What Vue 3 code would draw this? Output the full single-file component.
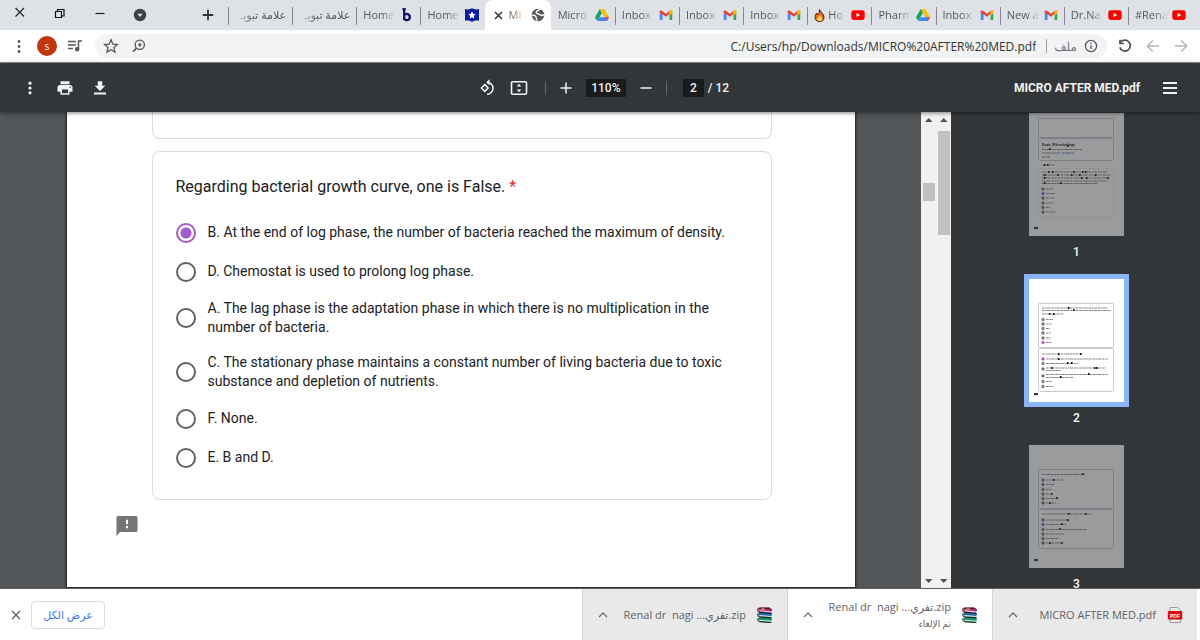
<script setup>
import { ref } from 'vue'

const tabs = [
  { title: 'علامة تبويـ', rtl: true },
  { title: 'علامة تبويـ', rtl: true },
  { title: 'Home', icon: 'b' },
  { title: 'Home', icon: 'badge' },
  { title: 'MI', icon: 'globe', active: true },
  { title: 'Micro', icon: 'drive' },
  { title: 'Inbox', icon: 'gmail' },
  { title: 'Inbox', icon: 'gmail' },
  { title: 'Inbox', icon: 'gmail' },
  { title: 'Ho', icon: 'youtube', flame: true },
  { title: 'Pharm', icon: 'drive' },
  { title: 'Inbox', icon: 'gmail' },
  { title: 'New a', icon: 'gmail' },
  { title: 'Dr.Na', icon: 'youtube' },
  { title: '#Rena', icon: 'youtube' }
]

const url = ref('C:/Users/hp/Downloads/MICRO%20AFTER%20MED.pdf')
const zoom = ref('110%')
const page = ref('2')
const answer = ref('B')

const options = [
  { id: 'B', text: 'B. At the end of log phase, the number of bacteria reached the maximum of density.' },
  { id: 'D', text: 'D. Chemostat is used to prolong log phase.' },
  { id: 'A', text: 'A. The lag phase is the adaptation phase in which there is no multiplication in the number of bacteria.' },
  { id: 'C', text: 'C. The stationary phase maintains a constant number of living bacteria due to toxic substance and depletion of nutrients.' },
  { id: 'F', text: 'F. None.' },
  { id: 'E', text: 'E. B and D.' }
]

const scrollbars = [
  { top: 12.3, size: 4 },
  { top: 0.5, size: 23.5 }
]

// Page miniatures: cards are [y, height], lines are [x, y, width, colour], radios are [y, selected].
const thumbs = [
  {
    n: 1,
    heading: 'Basic Microbiology',
    cards: [[6, 19], [26, 22]],
    lines: [
      [13, 36.5, 40], [13, 40, 19], [33, 40, 12, '#3b6fb5'], [13, 44, 8, '#c0392b'], [13, 52, 13],
      [13, 59, 66], [13, 62, 69], [13, 65, 68], [13, 68, 66], [13, 70.5, 56],
      [17, 76, 7], [17, 80.5, 9], [17, 85, 9], [17, 90, 7], [17, 94.5, 4], [17, 99, 10]
    ],
    radios: [[76], [80.5, true], [85], [90], [94.5], [99]],
    blots: [[20, 36], [38, 33], [15, 52], [18, 52], [19, 59], [23, 59], [44, 59], [53, 59], [56, 59], [15, 62], [28, 62], [42, 62], [50, 62], [66, 62], [15, 65], [52, 65], [57, 65], [78, 65], [15, 70], [31, 70]]
  },
  {
    n: 2,
    cards: [[25, 44], [70, 43]],
    lines: [
      [13, 29, 66], [13, 31.5, 69], [13, 35, 21],
      [17, 40.5, 7], [17, 45, 6], [17, 49.5, 4], [17, 54, 5], [17, 59, 5], [17, 63.5, 6],
      [13, 75, 40], [17, 80, 62], [17, 84.5, 32], [17, 89, 60], [17, 91.5, 15],
      [17, 95.5, 62], [17, 98.5, 27], [17, 102.5, 6], [17, 107.5, 7]
    ],
    radios: [[40.5], [45], [49.5], [54], [59], [63.5, true], [80, true], [84.5], [90], [97], [102.5], [107.5]],
    blots: [[39, 29], [44, 31], [20, 35], [24, 35], [29, 75], [51, 75], [29, 80], [38, 84], [42, 84], [22, 89], [65, 89], [67, 89], [59, 95], [31, 98]]
  },
  {
    n: 3,
    cards: [[25, 39], [65, 39]],
    lines: [
      [13, 29.5, 43], [17, 35, 17], [17, 39.5, 8], [17, 44.5, 6], [17, 49, 5], [17, 53.5, 13], [17, 58, 10],
      [13, 69, 49], [17, 75, 24], [17, 79.5, 20], [17, 84.5, 41], [17, 89, 18], [17, 93.5, 13], [17, 98, 17]
    ],
    radios: [[35, true], [39.5], [44.5], [49], [53.5], [58], [75], [79.5, true], [84.5], [89], [93.5], [98]],
    blots: [[53, 29], [24, 35], [22, 49], [27, 53], [20, 58], [39, 69], [56, 69], [38, 75], [32, 79], [30, 84], [20, 98], [32, 98]]
  }
]

const downloads = [
  { name: 'Renal dr  nagi ...تفري.zip', icon: 'rar', shaded: true },
  { name: 'Renal dr  nagi ...تفري.zip', note: 'تم الإلغاء', icon: 'rar' },
  { name: 'MICRO AFTER MED.pdf', icon: 'pdf', shaded: true }
]
</script>

<template>
  <div class="browser">
    <header class="tabstrip">
      <div class="window-controls">
        <button aria-label="Close window"><svg width="20" height="20" viewBox="0 0 20 20"><path d="M5.500 5l8.500 8.500M14 5l-8.500 8.500" stroke="#222" stroke-width="1.100" /></svg></button>
        <button aria-label="Restore window"><svg width="20" height="20" viewBox="0 0 20 20"><path d="M5.500 8.500h6v6h-6zM7.500 8V6.500h6.500v6.500H12" fill="none" stroke="#111" stroke-width="1.200" /></svg></button>
        <button aria-label="Minimize window"><svg width="20" height="20" viewBox="0 0 20 20"><path d="M5.500 10.500h9" stroke="#222" stroke-width="1.200" /></svg></button>
        <button aria-label="Search tabs"><svg width="20" height="20" viewBox="0 0 20 20"><circle cx="10" cy="12" r="6.200" fill="#3c4043" /><path d="M7.300 10.700h5.400L10 14z" fill="#dee1e6" /></svg></button>
      </div>
      <button class="new-tab" aria-label="New tab"><svg width="20" height="20" viewBox="0 0 20 20"><path d="M4.800 12h10.400M10 6.800v10.400" stroke="#333" stroke-width="1.800" /></svg></button>
      <nav class="tabs">
        <div v-for="(t, i) in tabs" :key="i" class="tab" :class="{ active: t.active, after: i === 5 }">
          <button v-if="t.active" class="tab-close" aria-label="Close tab"><svg width="9" height="9" viewBox="0 0 9 9"><path d="M1 1l7 7M8 1L1 8" stroke="#333" stroke-width="1.500" /></svg></button>
          <svg v-if="t.flame" class="flame" width="11" height="13" viewBox="0 0 11 13"><path d="M5.500.5C6 3 10 4.500 10 8.500c0 2.500-2 4-4.500 4S1 11 1 8.500C1 6.500 2 5.500 2.500 4c.6.6 1 1.200 1.200 2C5 4.500 5.800 2.500 5.500.5z" fill="#f26a1b" stroke="#3a2416" /><path d="M5.600 6c1.200 1.500 2.400 2.200 2.400 4 0 1.200-1 2-2.500 2S3.200 11.200 3.200 10c0-1.500 1.800-2 2.400-4z" fill="#ffd45a" /></svg>
          <a href="#" class="tab-title" :class="{ rtl: t.rtl }">{{ t.title }}</a>
          <svg v-if="t.icon === 'b'" class="fav" viewBox="0 0 14 14"><path d="M2.500 1.200h3.200M4.200 1v11M4.500 7c1-1.600 5.300-1.700 5.300 2.100 0 3.600-4 3.700-5.500 1.900" fill="none" stroke="#14146b" stroke-width="2.300" /></svg>
          <svg v-else-if="t.icon === 'badge'" class="fav" viewBox="0 0 14 14"><path d="M0 1c2.500 1 4.500.2 7-.7 2.500.9 4.500 1.700 7 .7v11.500c-3-.3-5 .2-7 1.200-2-1-4-1.500-7-1.200z" fill="#0b1e9c" /><path d="M7 3.200l1.100 2.500 2.700.3-2 1.800.5 2.700L7 9.200l-2.300 1.300.5-2.700-2-1.800 2.700-.3z" fill="#fff" /></svg>
          <svg v-else-if="t.icon === 'globe'" class="fav" viewBox="0 0 14 14"><circle cx="7" cy="7" r="6.200" fill="#53575b" /><path d="M1.200 7.300c1.500-.3 2.800.2 3.600 1 .8.700-.1 1.500.7 2.200.6.500.6 1 .3 2M9.200 1.300C7.500 2 5 3 5.200 4.700c.2 1.300 2 .7 2.800 1.400.8.700 1.700 1.600 3 1.300.9-.2 1.400-.6 2-1.200" fill="none" stroke="#fff" stroke-width="1.500" /></svg>
          <svg v-else-if="t.icon === 'drive'" class="fav" viewBox="0 0 14 14"><path d="M4.800 1L0 9.200l2.200 3.800L7 4.800z" fill="#0fa55b" /><path d="M4.800 1h4.400L14 9.200H9.600z" fill="#fbbc04" /><path d="M4.600 9.200H14L11.800 13H2.200z" fill="#4285f4" /><path d="M11 9.200h3L11.800 13z" fill="#ea4335" /></svg>
          <svg v-else-if="t.icon === 'gmail'" class="fav" viewBox="0 0 14 14"><path d="M.8 3v9h2.700V5.500z" fill="#4285f4" /><path d="M13.200 3v9h-2.700V5.500z" fill="#34a853" /><path d="M10.500 3.500L13.200 2v3.200l-2.700 2z" fill="#fbbc04" /><path d="M.8 2.200L3.500 3 7 5.700 10.500 3l1.700-.8 1 1.300L7 8.800.8 4.800z" fill="#ea4335" /><path d="M10.500 3l1.700-.8 1 .8v1.800l-2.700 2z" fill="#fbbc04" /></svg>
          <svg v-else-if="t.icon === 'youtube'" class="fav" viewBox="0 0 14 14"><rect x=".3" y="2.200" width="13.400" height="9.800" rx="2.400" fill="#f00" /><path d="M5.500 5v4.200L9.200 7.100z" fill="#fff" /></svg>
        </div>
      </nav>
    </header>

    <div class="address-row">
      <button class="sq" aria-label="Browser menu"><svg width="20" height="20" viewBox="0 0 20 20" fill="#55585c"><circle cx="10" cy="5.500" r="1.400" /><circle cx="10" cy="10.500" r="1.400" /><circle cx="10" cy="15.500" r="1.400" /></svg></button>
      <button class="avatar" aria-label="Profile">s</button>
      <button class="sq" aria-label="Media"><svg width="20" height="20" viewBox="0 0 20 20" fill="none" stroke="#55585c" stroke-width="1.500"><path d="M3 5.500h8M3 9h8M3 12.500h5M13.500 13V5h3.500" /><circle cx="12.100" cy="13.300" r="1.500" fill="#55585c" /></svg></button>
      <div class="omnibox">
        <button class="sq" aria-label="Bookmark"><svg width="16" height="16" viewBox="0 0 16 16"><path d="M8 1.800l1.800 4.300 4.600.4-3.500 3 1.100 4.600L8 11.700l-4 2.400 1.100-4.600-3.500-3 4.600-.4z" fill="none" stroke="#55585c" stroke-width="1.300" /></svg></button>
        <button class="sq" aria-label="Zoom"><svg width="16" height="16" viewBox="0 0 16 16" fill="none" stroke="#55585c" stroke-width="1.300"><circle cx="8.800" cy="6.800" r="4.600" /><path d="M5.500 10.200L2 13.600" stroke-width="1.700" /><path d="M6.800 6.800h4M8.800 4.800v4" /></svg></button>
        <input v-model="url" class="url" aria-label="Address" />
        <span class="divider"></span>
        <span class="scheme">ملف</span>
        <svg width="14" height="14" viewBox="0 0 14 14"><circle cx="7" cy="7" r="5.600" fill="none" stroke="#55585c" stroke-width="1.300" /><path d="M7 6.200V10M7 3.700v1.400" stroke="#55585c" stroke-width="1.400" /></svg>
      </div>
      <div class="nav">
        <button class="sq" aria-label="Reload"><svg width="16" height="16" viewBox="0 0 16 16" fill="none" stroke="#4c5054" stroke-width="1.700"><path d="M3.400 4.600A5.400 5.400 0 1 1 2.800 9.400" /><path d="M3 1.800v3.700h3.900" /></svg></button>
        <button class="sq" aria-label="Forward"><svg width="16" height="16" viewBox="0 0 16 16" fill="none" stroke="#b4b6b9" stroke-width="1.500"><path d="M14 8H2.500M7.800 2.500L2.300 8l5.500 5.500" /></svg></button>
        <button class="sq" aria-label="Back"><svg width="16" height="16" viewBox="0 0 16 16" fill="none" stroke="#b4b6b9" stroke-width="1.500"><path d="M2 8h11.500M8.200 2.500L13.700 8l-5.500 5.500" /></svg></button>
      </div>
    </div>

    <div class="pdf-toolbar">
      <div class="group tools">
        <button aria-label="More"><svg width="18" height="18" viewBox="0 0 18 18" fill="#f1f1f1"><circle cx="9" cy="4.200" r="1.600" /><circle cx="9" cy="9" r="1.600" /><circle cx="9" cy="13.800" r="1.600" /></svg></button>
        <button aria-label="Print"><svg width="18" height="18" viewBox="0 0 24 24" fill="#f1f1f1"><path d="M19 8H5c-1.660 0-3 1.340-3 3v6h4v4h12v-4h4v-6c0-1.660-1.340-3-3-3zm-3 11H8v-5h8v5zm3-7a1 1 0 1 1 0-2 1 1 0 0 1 0 2zM18 3H6v4h12V3z" /></svg></button>
        <button aria-label="Download"><svg width="18" height="18" viewBox="0 0 24 24" fill="#f1f1f1"><path d="M19 9h-4V3H9v6H5l7 7 7-7zM4 18v2.500h16V18H4z" /></svg></button>
      </div>
      <div class="group center">
        <button aria-label="Rotate"><svg width="18" height="18" viewBox="0 0 18 18" fill="none" stroke="#f1f1f1" stroke-width="1.500"><path d="M5.800 5.600L9.200 9l-3.400 3.400L2.400 9z" /><path d="M8 3.200a6 6 0 1 1 0 12" /><path d="M10.500.8L7.800 3.300l2.700 2.400" fill="#f1f1f1" stroke-width="1" /></svg></button>
        <button class="fit" aria-label="Fit to page"><svg width="18" height="18" viewBox="0 0 18 18"><rect x="1.500" y="2.700" width="15" height="12.600" rx="1" fill="none" stroke="#f1f1f1" stroke-width="1.600" /><path d="M9 4.800l2.300 2.700H6.700zM9 13.200l2.300-2.700H6.700z" fill="#f1f1f1" /></svg></button>
        <span class="divider"></span>
        <button aria-label="Zoom in"><svg width="14" height="14" viewBox="0 0 14 14"><path d="M1.500 7h11M7 1.500v11" stroke="#f1f1f1" stroke-width="1.500" /></svg></button>
        <input v-model="zoom" class="field zoom" aria-label="Zoom level" />
        <button aria-label="Zoom out"><svg width="14" height="14" viewBox="0 0 14 14"><path d="M1.500 7h11" stroke="#f1f1f1" stroke-width="1.500" /></svg></button>
        <span class="divider"></span>
        <div class="pager"><input v-model="page" class="field page-no" aria-label="Page number" /><span>/ 12</span></div>
      </div>
      <div class="group end">
        <span class="doc-title">MICRO AFTER MED.pdf</span>
        <button aria-label="Toggle sidebar"><svg width="18" height="18" viewBox="0 0 18 18"><path d="M2 4h14M2 9h14M2 14h14" stroke="#f1f1f1" stroke-width="2" /></svg></button>
      </div>
    </div>

    <main class="viewer">
      <section class="canvas">
        <article class="sheet">
          <div class="card previous"></div>
          <fieldset class="card">
            <legend>Regarding bacterial growth curve, one is False. <span class="required">*</span></legend>
            <div class="options">
              <label v-for="o in options" :key="o.id" class="option">
                <input v-model="answer" type="radio" name="answer" :value="o.id" />
                <span>{{ o.text }}</span>
              </label>
            </div>
          </fieldset>
          <button class="feedback" aria-label="Report a problem"><svg width="22" height="21" viewBox="0 0 22 21"><path d="M2 0h18a1.500 1.500 0 0 1 1.500 1.500v13A1.500 1.500 0 0 1 20 16H4l-3.500 4V1.500A1.500 1.500 0 0 1 2 0z" fill="#757575" /><path d="M11 3.800v4.400M11 10v2.200" stroke="#fff" stroke-width="2" /></svg></button>
        </article>
      </section>
      <div class="scrollbars">
        <div v-for="(s, i) in scrollbars" :key="i" class="scrollbar">
          <svg width="15" height="17" viewBox="0 0 15 17"><path d="M4 10h7.500L7.700 6z" fill="#505050" /></svg>
          <div class="track"><div class="handle" :style="{ top: s.top + '%', height: s.size + '%' }"></div></div>
          <svg width="15" height="17" viewBox="0 0 15 17"><path d="M4 8h7.500l-3.800 4z" fill="#505050" /></svg>
        </div>
      </div>
      <aside class="sidebar">
        <a v-for="t in thumbs" :key="t.n" href="#" class="thumb" :class="{ current: t.n === 2 }">
          <svg class="mini" width="95" height="123" viewBox="0 0 95 123">
            <rect width="95" height="123" fill="#fff" />
            <rect v-for="c in t.cards" :key="c[0]" x="9.500" :y="c[0] - 0.5" width="75" :height="c[1]" rx="1" fill="none" stroke="#c8cad0" />
            <rect v-if="t.n === 1" x="9.500" y="55.500" width="75" height="49" fill="none" stroke="#f0f0f3" />
            <text v-if="t.heading" x="13" y="33" class="mini-heading">{{ t.heading }}</text>
            <line v-for="(l, i) in t.lines" :key="'l' + i" :x1="l[0]" :x2="l[0] + l[2]" :y1="l[1]" :y2="l[1]" :stroke="l[3] || '#777'" stroke-width=".9" stroke-dasharray="2.600 .6 1.500 .5 3.400 .7" />
            <circle v-for="(r, i) in t.radios" :key="'r' + i" cx="14" :cy="r[0]" r="1.300" :fill="r[1] ? '#a95fd0' : '#999'" :stroke="r[1] ? '#a24fc9' : '#555'" stroke-width=".7" />
            <rect v-for="(b, i) in t.blots" :key="'b' + i" :x="b[0]" :y="b[1] - 1" width="1.500" height="2" fill="#111" />
            <path d="M5 114h4v2H6l-1 .8z" fill="#333" />
          </svg>
          <span>{{ t.n }}</span>
        </a>
      </aside>
    </main>

    <footer class="shelf">
      <button class="sq" aria-label="Close downloads bar"><svg width="10" height="10" viewBox="0 0 10 10"><path d="M1 1l8 8M9 1L1 9" stroke="#5f6368" stroke-width="1.400" /></svg></button>
      <button class="show-all">عرض الكل</button>
      <div class="downloads">
        <div v-for="(d, i) in downloads" :key="i" class="download" :class="{ shaded: d.shaded }">
          <button class="sq" aria-label="Download options"><svg width="10" height="10" viewBox="0 0 10 10"><path d="M1 7l4-4 4 4" fill="none" stroke="#6f7276" stroke-width="1.400" /></svg></button>
          <div class="file">
            <a href="#">{{ d.name }}</a>
            <small v-if="d.note" dir="rtl">{{ d.note }}</small>
          </div>
          <svg v-if="d.icon === 'rar'" width="16" height="16" viewBox="0 0 16 16">
            <path d="M1 2l2-1.500h9l3 2.500-1 2.500L2 5z" fill="#b5287d" /><path d="M1 7l2-1.500h11l1 2L14 10 2 9.500z" fill="#2667a8" /><path d="M1 12l2-2h11l1 2-1 3H3z" fill="#17966a" />
            <path d="M2.500 3.700L14.500 5M2.500 8.500l12 1M2.500 13.300l12 1" stroke="#e8e8e8" stroke-width="1" /><path d="M1 1.500C.3 3 .5 4.500 2 5.300l12.500 1M1 6.500c-.6 1.500-.3 3 1 3.500l12.500.8M1 11.300c-.6 1.800 0 3 1.500 3.400l12 1M1.500 1.200h11l2.500 2" fill="none" stroke="#161616" stroke-width="1" /><path d="M4 2h4" stroke="#f0c33c" />
          </svg>
          <svg v-else width="16" height="16" viewBox="0 0 16 16"><path d="M3 .5h7.500L13.500 3v12.500H3z" fill="#ececec" stroke="#9b9b9b" /><rect x=".8" y="4" width="14.400" height="8.500" rx="1" fill="#e30613" /><text x="8" y="10.500" class="pdf-label">PDF</text></svg>
        </div>
      </div>
    </footer>
  </div>
</template>

<style>
body { margin: 0; }
</style>

<style scoped>
* { box-sizing: border-box; }
.browser {
  display: flex; flex-direction: column; height: 100vh; overflow: hidden;
  font-family: "Open Sans", "Noto Sans", "DejaVu Sans", sans-serif; font-size: 12px; color: #333; background: #fff;
}
button { border: 0; background: none; padding: 0; margin: 0; font: inherit; color: inherit; display: flex; align-items: center; justify-content: center; flex: none; }
a { color: inherit; text-decoration: none; }
svg { display: block; flex: none; }
input { font: inherit; color: inherit; border: 0; background: none; padding: 0; margin: 0; min-width: 0; }

.tabstrip { display: flex; flex: none; height: 30px; background: #dee1e6; padding-right: 8px; }
.window-controls { display: flex; gap: 20px; padding: 3px 0 0 10px; align-items: flex-start; }
.new-tab { margin: 3px 10px 0 48px; align-self: flex-start; }
.tabs { display: flex; flex: 1; min-width: 0; }
.tab { flex: 1 1 0; min-width: 0; display: flex; align-items: center; position: relative; padding: 0 6px 0 7px; font-size: 11px; color: #55585c; }
.tab::before { content: ""; position: absolute; left: 0; top: 7px; height: 18px; width: 1px; background: #85888c; }
.tab.active { background: #fff; border-radius: 8px 8px 0 0; padding-left: 9px; color: #8a6c55; }
.tab.active::before, .tab.after::before { display: none; }
.tab-title { flex: 1; min-width: 0; white-space: nowrap; margin-right: 4px; line-height: 18px; -webkit-mask-image: linear-gradient(to left, transparent, #000 14px); mask-image: linear-gradient(to left, transparent, #000 14px); }
.tab-title.rtl { direction: rtl; margin-right: 0; -webkit-mask-image: linear-gradient(to right, transparent, #000 20px); mask-image: linear-gradient(to right, transparent, #000 20px); }
.tab-close { margin-right: 6px; }
.flame { margin-right: 3px; }
.fav { width: 14px; height: 14px; }

.address-row { display: flex; flex: none; align-items: center; height: 33px; padding: 0 11px 0 9px; border-bottom: 1px solid #90989b; }
.avatar { width: 20px; height: 20px; border-radius: 50%; background: #bf360c; color: #fff; font-size: 10px; line-height: 20px; margin: 0 8px 0 8px; }
.omnibox { display: flex; align-items: center; flex: 1; min-width: 0; height: 24px; border-radius: 12px; background: #f1f3f4; margin: 0 10px; padding: 0 9px 0 8px; }
.omnibox .sq + .sq { margin-left: 12px; }
.url { flex: 1; text-align: right; font-size: 12px; color: #333; }
.omnibox .divider { width: 1px; height: 14px; background: #9aa0a6; margin: 0 7px 0 10px; }
.scheme { color: #70757a; margin-right: 7px; }
.nav { display: flex; gap: 12px; }

.pdf-toolbar { position: relative; z-index: 1; display: grid; grid-template-columns: 1fr auto 1fr; align-items: center; flex: none; height: 49px; padding: 0 21px; background: #323639; color: #f1f1f1; box-shadow: 0 1px 4px rgba(0, 0, 0, .5); font-family: Roboto, "Liberation Sans", sans-serif; font-weight: 500; font-size: 12px; }
.group { display: flex; align-items: center; }
.tools { gap: 17px; }
.center { gap: 13px; padding-left: 8px; }
.center .divider { width: 1px; height: 14px; background: #65686b; }
.center .fit { margin-right: 4px; }
.field { height: 18px; background: #191b1c; text-align: center; }
.zoom { width: 40px; }
.page-no { width: 21px; }
.pager { display: flex; align-items: center; gap: 4px; margin-left: 3px; }
.end { justify-content: flex-end; gap: 21px; }
.doc-title { font-weight: 700; }

.viewer { display: flex; flex: 1; min-height: 0; overflow: hidden; border-bottom: 1px solid #5c5f62; }
.canvas { flex: 1; min-width: 0; display: flex; justify-content: center; background: #525659; padding: 0 12px 1px; }
.sheet { flex: 0 1 788px; min-width: 0; background: #fff; box-shadow: 0 0 2px 1px #1c1d1e; font-family: Roboto, "Liberation Sans", sans-serif; color: #202124; padding: 0 47px 0 49px; }
.card { max-width: 620px; margin: 0 auto 12px; border: 1px solid #dadce0; border-radius: 8px; padding: 24px 23px 30px; min-width: 0; }
.card.previous { height: 27px; padding: 0; border-top: 0; border-radius: 0 0 8px 8px; }
legend { float: left; width: 100%; padding: 0; font-size: 16px; line-height: 22px; }
.required { color: #d93025; }
.options { clear: both; display: flex; flex-direction: column; gap: 16px; padding-top: 23px; }
.option { display: flex; align-items: center; gap: 12px; min-height: 23px; font-size: 14px; line-height: 19px; }
.option input { appearance: none; flex: none; width: 20px; height: 20px; border: 2px solid #5f6368; border-radius: 50%; }
.option input:checked { border-color: #a25bc8; background: radial-gradient(circle, #a25bc8 5px, transparent 6px); }
.feedback { margin-top: 16px; }

.scrollbars { display: flex; flex: none; background: #f1f1f1; }
.scrollbar { display: flex; flex-direction: column; width: 15px; }
.track { flex: 1; position: relative; }
.handle { position: absolute; left: 2px; right: 1px; background: #c1c1c1; }

.sidebar { flex: none; width: 249px; background: #323639; display: flex; flex-direction: column; align-items: center; gap: 19px; padding: 1px 0 0 2px; overflow: hidden; }
.thumb { display: flex; flex-direction: column; align-items: center; gap: 8px; flex: none; color: #fff; font-family: Roboto, sans-serif; font-size: 12px; font-weight: 500; line-height: 16px; }
.mini { opacity: .5; }
.current .mini { opacity: 1; box-shadow: 0 0 0 5px #8ab4f8; }
.mini-heading { font-family: "Liberation Serif", serif; font-weight: 700; font-size: 4px; fill: #111; }

.shelf { display: flex; flex: none; align-items: center; height: 51px; padding: 0 3px 0 11px; background: #fff; }
.show-all { width: 74px; height: 28px; margin-left: 10px; border: 1px solid #dadce0; border-radius: 4px; color: #3b78e7; font-size: 11px; }
.downloads { display: flex; margin-left: auto; align-self: stretch; }
.download { width: 205px; display: flex; align-items: center; padding: 0 14px 0 15px; border-left: 1px solid #d4d4d4; color: #5f6368; font-size: 11px; }
.download.shaded { background: #e9e9e9; }
.file { flex: 1; display: flex; flex-direction: column; align-items: flex-end; padding-right: 11px; white-space: pre; line-height: 17px; }
.file small { font-size: 9px; }
.pdf-label { font-family: "Liberation Sans", sans-serif; font-weight: 700; font-size: 5px; fill: #fff; text-anchor: middle; }
</style>
